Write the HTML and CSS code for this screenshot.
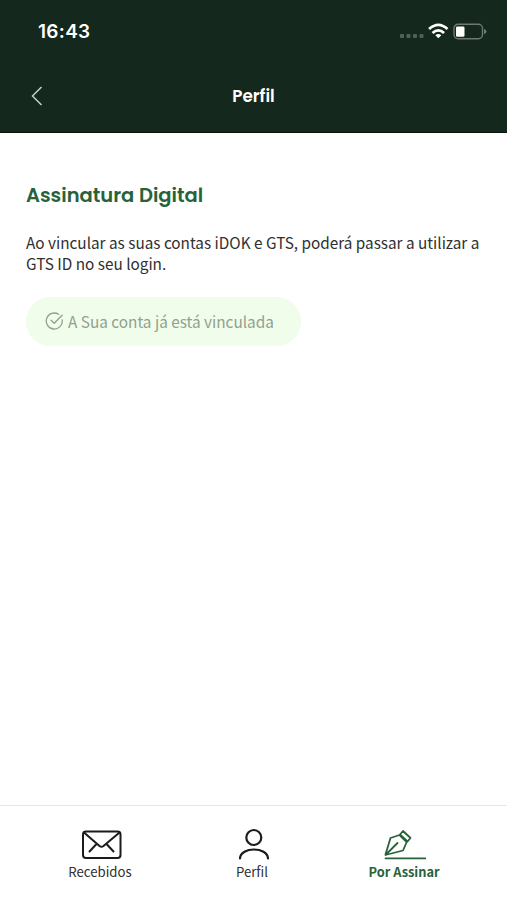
FILE: index.html
```html
<!DOCTYPE html>
<html lang="pt">
<head>
<meta charset="utf-8">
<title>Perfil</title>
<link rel="stylesheet" href="styles.css">
</head>
<body>
<header class="header">
  <div class="status">
    <span class="time">16:43</span>
    <svg class="indicators" width="88" height="20" viewBox="0 0 88 20">
      <g fill="#526057"><rect x="1" y="13" width="4" height="4" rx="1"/><rect x="7.500" y="13" width="4" height="4" rx="1"/><rect x="14" y="13" width="4" height="4" rx="1"/><rect x="20.500" y="13" width="4" height="4" rx="1"/></g>
      <g fill="none" stroke="#fff" stroke-width="2.700"><path d="M30.100 8.100Q39.300 -.2 48.500 8.100"/><path d="M33.500 11.900Q39.300 6.700 45.100 11.900"/></g>
      <path d="M36.300 14.200Q39.300 11.800 42.300 14.200L39.300 17.300Z" fill="#fff"/>
      <rect x="55" y="3.300" width="28.500" height="14.500" rx="4" fill="none" stroke="#6c7a71" stroke-width="1.400"/>
      <rect x="57" y="5.400" width="8.500" height="10.400" rx="1.300" fill="#fff"/>
      <path d="M85 8Q87.500 8.500 87.500 10.500T85 13Z" fill="#6c7a71"/>
    </svg>
  </div>
  <div class="titlebar">
    <svg width="12" height="20" viewBox="0 0 12 20"><path d="M10.500 1L1.500 10L10.500 19" fill="none" stroke="#c5d0c8" stroke-width="1.500"/></svg>
    <h1>Perfil</h1>
    <span></span>
  </div>
</header>
<main>
  <h2>Assinatura Digital</h2>
  <p>Ao vincular as suas contas iDOK e GTS, poderá passar a utilizar a<br>GTS ID no seu login.</p>
  <button class="linked" disabled>
    <svg width="19" height="19" viewBox="0 0 19 19" fill="none" stroke="#929f8e" stroke-width="1.300" stroke-linecap="round" stroke-linejoin="round"><path d="M13.600 2.300A8 8 0 1 0 17.200 8"/><path d="M6 8.200L9.200 11.300L17 3.200"/></svg>
    <span>A Sua conta já está vinculada</span>
  </button>
</main>
<nav>
  <a class="tab">
    <svg width="44" height="36" viewBox="0 0 44 36" fill="none" stroke="#1b1b1b" stroke-width="2" stroke-linecap="round" stroke-linejoin="round"><rect x="5" y="5.500" width="37.500" height="26.500" rx="3"/><path d="M6 6.500L21.500 20Q23.500 21.500 25.500 20L41.500 6.500M18.500 18L11.500 25.500M28.500 18L35.500 25.500"/></svg>
    <span>Recebidos</span>
  </a>
  <a class="tab">
    <svg width="44" height="36" viewBox="0 0 44 36" fill="none" stroke="#1b1b1b" stroke-width="2.200" stroke-linecap="round"><circle cx="23.800" cy="11.500" r="7.500"/><path d="M10 32.500C10.500 20.500 37.500 20.500 38 32.500"/></svg>
    <span>Perfil</span>
  </a>
  <a class="tab active">
    <svg width="44" height="36" viewBox="0 0 44 36" fill="none" stroke="#27623a" stroke-width="1.800" stroke-linecap="round" stroke-linejoin="round"><path d="M3.500 28.500L8.500 12L17.500 9L24.700 16L21 24.500L3.500 29L15.500 17"/><path d="M21 5L28.500 12L25.500 15.500L18 8.500Z"/><path d="M3.500 32.300H44"/></svg>
    <span>Por Assinar</span>
  </a>
</nav>
</body>
</html>
```

FILE: styles.css
```css
* { box-sizing: border-box; }
body {
  margin: 0;
  height: 900px;
  display: flex;
  flex-direction: column;
  overflow: hidden;
  background: #fff;
  color: #303030;
  font-family: "Source Sans Pro", "Noto Sans CJK JP", sans-serif;
}
h1, h2, p { margin: 0; white-space: nowrap; }
.header {
  height: 133px;
  background: #15281d;
  border-bottom: 1px solid #07130c;
  color: #fff;
}
.status {
  height: 62px;
  padding: 0 20px 0 38px;
  display: flex;
  align-items: center;
  justify-content: space-between;
}
.time { padding-top: 1px; font: 600 19px/24px Inter, sans-serif; letter-spacing: .3px; }
.titlebar {
  height: 68px;
  padding: 0 31px;
  display: grid;
  grid-template-columns: 1fr auto 1fr;
  align-items: center;
}
h1 { padding-bottom: 1px; font: 600 16.800px/24px Poppins, Inter, sans-serif; }
main { flex: 1; padding: 48px 26px 0; }
h2 {
  color: #27623a;
  font: 600 19.500px/30px Poppins, Inter, sans-serif;
}
p { margin-top: 21px; font-size: 15.320px; line-height: 21px; }
.linked {
  width: 275px;
  height: 49px;
  margin-top: 23px;
  padding: 0 0 0 19px;
  display: flex;
  align-items: center;
  gap: 4px;
  border: 0;
  border-radius: 25px;
  background: #f0fdea;
  color: #929f8e;
  font: 400 15.350px/24px "Source Sans Pro", "Noto Sans CJK JP", sans-serif;
  white-space: nowrap;
}
.linked span { padding-bottom: 2px; }
nav {
  height: 95px;
  padding: 20px 24px 0;
  display: grid;
  grid-template-columns: repeat(3, 152px);
  border-top: 1px solid #e5e5e5;
}
.tab {
  display: flex;
  flex-direction: column;
  align-items: center;
  font-size: 13.200px;
  line-height: 20px;
}
.active { color: #27623a; font-size: 12.800px; font-weight: 700; }
```
